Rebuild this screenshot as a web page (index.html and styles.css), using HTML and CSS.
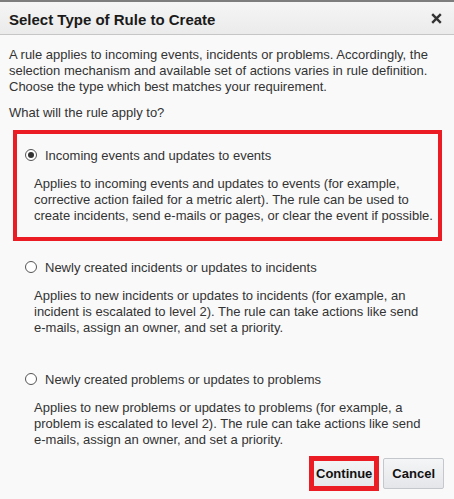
FILE: index.html
```html
<!DOCTYPE html>
<html lang="en">
<head>
<meta charset="utf-8">
<title>Select Type of Rule to Create</title>
<link rel="stylesheet" href="styles.css">
</head>
<body>
<div class="dialog">
  <div class="header">
    <h1 class="title">Select Type of Rule to Create</h1>
    <button class="close" aria-label="Close">
      <svg width="11" height="11" viewBox="0 0 11 11"><path d="M1.2 1.2 L9.8 9.8 M9.8 1.2 L1.2 9.8" stroke="#333" stroke-width="2.4" stroke-linecap="butt"/></svg>
    </button>
  </div>
  <div class="content">
    <p class="intro">A rule applies to incoming events, incidents or problems. Accordingly, the selection mechanism and available set of actions varies in rule definition. Choose the type which best matches your requirement.</p>
    <p class="question">What will the rule apply to?</p>
    <div class="options">
      <div class="option selected">
        <label class="opt-label"><span class="radio checked"></span>Incoming events and updates to events</label>
        <p class="desc">Applies to incoming events and updates to events (for example, corrective action failed for a metric alert). The rule can be used to create incidents, send e-mails or pages, or clear the event if possible.</p>
      </div>
      <div class="option">
        <label class="opt-label"><span class="radio"></span>Newly created incidents or updates to incidents</label>
        <p class="desc">Applies to new incidents or updates to incidents (for example, an incident is escalated to level 2). The rule can take actions like send<br>e-mails, assign an owner, and set a priority.</p>
      </div>
      <div class="option">
        <label class="opt-label"><span class="radio"></span>Newly created problems or updates to problems</label>
        <p class="desc">Applies to new problems or updates to problems (for example, a problem is escalated to level 2). The rule can take actions like send e-mails, assign an owner, and set a priority.</p>
      </div>
    </div>
    <div class="footer">
      <button class="btn btn-continue">Continue</button>
      <button class="btn btn-cancel">Cancel</button>
    </div>
  </div>
</div>
</body>
</html>
```
FILE: styles.css
```css
* { box-sizing: border-box; }
html, body { margin: 0; padding: 0; }
body {
  font-family: "Liberation Sans", Arial, sans-serif;
  font-size: 13px;
  color: #333;
  background: #f9f9f9;
}
.dialog {
  width: 454px;
  height: 499px;
  overflow: hidden;
  background: #f9f9f9;
  border-top: 2px solid #7d7d7d;
}
.header {
  height: 33px;
  display: flex;
  align-items: center;
  justify-content: space-between;
  padding: 0 12px 0 9px;
  background: linear-gradient(#f5f5f5, #ebebeb);
  border-bottom: 1px solid #c6c6c6;
}
.title {
  margin: 0;
  font-size: 15px;
  font-weight: bold;
  color: #1a1a1a;
  padding-top: 2px;
}
.close {
  border: 0;
  background: none;
  padding: 0;
  width: 11px;
  height: 11px;
  display: flex;
  margin-top: 1px;
}
.content {
  padding: 12px 9px 0 9px;
  line-height: 16px;
}
.intro { margin: 0; }
.question { margin: 10px 0 9px 0; }
.options {
  margin: 0 3px 0 4px;
  display: flex;
  flex-direction: column;
  gap: 1px;
}
.option {
  border: 4px solid transparent;
  padding: 14px 4px 13px 8px;
}
.option:last-child { padding-bottom: 4px; border-bottom-width: 0; }
.option.selected { border-color: #ec1c24; }
.opt-label {
  display: flex;
  align-items: center;
  gap: 8px;
  height: 16px;
}
.radio {
  width: 12px;
  height: 12px;
  border: 1px solid #555;
  border-radius: 50%;
  background: #fff;
  display: flex;
  align-items: center;
  justify-content: center;
  margin-top: -2px;
}
.radio.checked::after {
  content: "";
  width: 6px;
  height: 6px;
  border-radius: 50%;
  background: #333;
}
.desc {
  margin: 12px 0 0 9px;
}
.footer {
  display: flex;
  justify-content: flex-end;
  gap: 5px;
  padding: 6px 1px 0 0;
}
.btn {
  font-family: "Liberation Sans", Arial, sans-serif;
  font-size: 13px;
  font-weight: bold;
  color: #111;
  height: 31px;
  border: 1px solid #c4c8cc;
  border-radius: 2px;
  background: linear-gradient(#f4f5f6, #e4e6e9);
}
.btn-continue { padding: 0 5px; position: relative; }
.btn-continue::after {
  content: "";
  position: absolute;
  top: -3px;
  bottom: -3px;
  left: -2px;
  right: -2px;
  border: 5px solid #ec1c24;
}
.btn-cancel { padding: 0 8px; }
```
